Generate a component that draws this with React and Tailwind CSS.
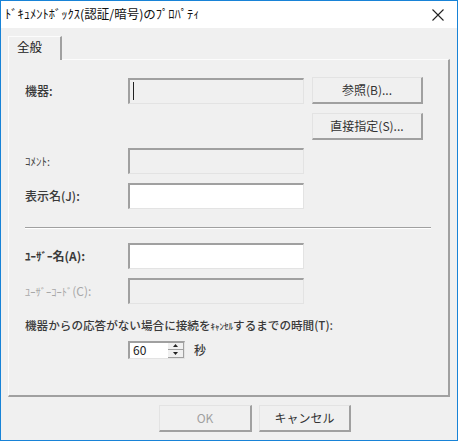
import React from "react";

const font = { fontFamily: '"Noto Sans CJK JP", "Noto Sans", sans-serif' };

function Field({ white, cursor, w = "w-[176px]", h = "h-[26px]", children }) {
  return (
    <div
      className={`${w} ${h} relative border-t-2 border-l-2 border-t-[#a0a0a0] border-l-[#a0a0a0] border-b border-r border-b-[#e3e3e3] border-r-[#e3e3e3] ${
        white ? "bg-white" : "bg-[#f0f0f0]"
      }`}
    >
      {cursor && <div className="absolute left-[3px] top-[2px] w-px h-[18px] bg-[#222]" />}
      {children}
    </div>
  );
}

function Btn({ children, w = "w-[111px]", disabled }) {
  return (
    <div
      className={`${w} h-[27px] flex items-center justify-center border-t border-l border-t-[#e3e3e3] border-l-[#e3e3e3] border-b-2 border-r-2 border-b-[#a0a0a0] border-r-[#a0a0a0] bg-[#f0f0f0] text-[12px] ${
        disabled ? "text-[#a0a0a0]" : "text-[#333]"
      }`}
    >
      {children}
    </div>
  );
}

function Label({ children, disabled, bold }) {
  const weight = disabled ? "font-normal text-[#a8a8a8]" : bold ? "font-semibold text-[#3a3a3a]" : "font-medium text-[#3a3a3a]";
  return <div className={`w-[103px] text-[12px] leading-none whitespace-nowrap ${weight}`}>{children}</div>;
}

export default function App() {
  return (
    <div className="w-[459px] h-[442px] bg-white" style={font}>
      <div className="w-[458px] h-[441px] border border-[#1883d7] bg-[#f0f0f0] flex flex-col">
        {/* title bar */}
        <div className="h-[27px] bg-white flex items-center justify-between pl-[4px] pr-[9px]">
          <div className="text-[12.5px] text-[#111] leading-none">ﾄﾞｷｭﾒﾝﾄﾎﾞｯｸｽ(認証/暗号)のﾌﾟﾛﾊﾟﾃｨ</div>
          <svg width="12" height="12" viewBox="0 0 12 12" className="mr-[4px]">
            <path d="M0.5 0.5 L11.5 11.5 M11.5 0.5 L0.5 11.5" stroke="#222" strokeWidth="1.1" fill="none" />
          </svg>
        </div>
        {/* body */}
        <div className="flex-1 flex flex-col pt-[8px] pl-[7px] pr-[7px]">
          {/* tab */}
          <div className="flex">
            <div className="w-[54px] h-[24px] -mb-px relative z-10 bg-[#f0f0f0] border-t border-l border-t-[#fcfcfc] border-l-[#fcfcfc] border-r-2 border-r-[#a0a0a0] flex items-start pt-[4px] pl-[8px] text-[12.5px] text-[#222] leading-none">
              全般
            </div>
          </div>
          {/* panel */}
          <div className="h-[338px] border-t border-l border-t-[#fcfcfc] border-l-[#fcfcfc] border-r-2 border-b-2 border-r-[#a0a0a0] border-b-[#a0a0a0] pt-[17px] pl-[16px] pr-[15px] flex flex-col">
            <div className="flex items-center">
              <Label>機器:</Label>
              <Field cursor />
              <div className="ml-[8px]">
                <Btn>参照(B)...</Btn>
              </div>
            </div>
            <div className="flex mt-[9px] pl-[287px]">
              <Btn>直接指定(S)...</Btn>
            </div>
            <div className="flex items-center mt-[8px]">
              <Label>
                <span className="text-[11px] font-normal text-[#444]">ｺﾒﾝﾄ:</span>
              </Label>
              <Field />
            </div>
            <div className="flex items-center mt-[9px]">
              <Label>表示名(J):</Label>
              <Field white />
            </div>
            <div className="mt-[18px] h-px bg-[#a0a0a0] border-b border-b-white box-content mr-[2px]" />
            <div className="flex items-center mt-[14px]">
              <Label bold>
                <span className="text-[11px]">ﾕｰｻﾞｰ</span>名(A):
              </Label>
              <Field white />
            </div>
            <div className="flex items-center mt-[9px]">
              <Label disabled>
                <span className="text-[10.5px]">ﾕｰｻﾞｰｺｰﾄﾞ</span>(C):
              </Label>
              <Field />
            </div>
            <div className="mt-[16px] text-[11.6px] leading-none font-medium text-[#3a3a3a] whitespace-nowrap">
              機器からの応答がない場合に接続を<span className="text-[9px]">ｷｬﾝｾﾙ</span>するまでの時間(T):
            </div>
            <div className="flex items-center mt-[9px] pl-[103px]">
              <div className="flex h-[18px]">
                <div className="w-[40px] h-[18px] bg-white border-t-2 border-l-2 border-t-[#a0a0a0] border-l-[#a0a0a0] border-b border-b-[#e3e3e3] flex items-center pl-[3px] text-[12px] text-[#222] leading-none">
                  60
                </div>
                <div className="w-[17px] h-[18px] flex flex-col border-t-2 border-t-[#a0a0a0] border-r border-r-[#e3e3e3] border-b border-b-[#e3e3e3]">
                  <div className="flex-1 flex items-center justify-center bg-[#f0f0f0] border-b border-r border-b-[#a0a0a0] border-r-[#a0a0a0]">
                    <svg width="5" height="3" viewBox="0 0 5 3"><path d="M2.5 0 L5 3 L0 3 Z" fill="#222" /></svg>
                  </div>
                  <div className="flex-1 flex items-center justify-center bg-[#f0f0f0] border-b border-r border-b-[#a0a0a0] border-r-[#a0a0a0]">
                    <svg width="5" height="3" viewBox="0 0 5 3"><path d="M0 0 L5 0 L2.5 3 Z" fill="#222" /></svg>
                  </div>
                </div>
              </div>
              <div className="ml-[9px] text-[12px] font-medium text-[#3a3a3a] leading-none">秒</div>
            </div>
          </div>
          {/* footer */}
          <div className="flex justify-end gap-[7px] mt-[8px] pr-[99px]">
            <Btn w="w-[93px]" disabled>OK</Btn>
            <Btn w="w-[92px]">キャンセル</Btn>
          </div>
        </div>
      </div>
    </div>
  );
}
